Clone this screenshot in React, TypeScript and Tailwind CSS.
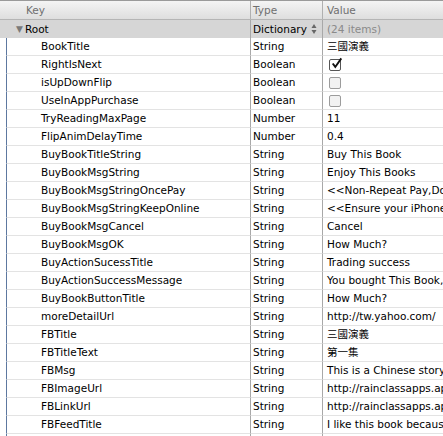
import React from "react";

type Row = {
  key: string;
  type: string;
  value?: string;
  check?: boolean;
};

const rows: Row[] = [
  { key: "BookTitle", type: "String", value: "三國演義" },
  { key: "RightIsNext", type: "Boolean", check: true },
  { key: "isUpDownFlip", type: "Boolean", check: false },
  { key: "UseInAppPurchase", type: "Boolean", check: false },
  { key: "TryReadingMaxPage", type: "Number", value: "11" },
  { key: "FlipAnimDelayTime", type: "Number", value: "0.4" },
  { key: "BuyBookTitleString", type: "String", value: "Buy This Book" },
  { key: "BuyBookMsgString", type: "String", value: "Enjoy This Books" },
  { key: "BuyBookMsgStringOncePay", type: "String", value: "<<Non-Repeat Pay,Download Forever>>" },
  { key: "BuyBookMsgStringKeepOnline", type: "String", value: "<<Ensure your iPhone is online>>" },
  { key: "BuyBookMsgCancel", type: "String", value: "Cancel" },
  { key: "BuyBookMsgOK", type: "String", value: "How Much?" },
  { key: "BuyActionSucessTitle", type: "String", value: "Trading success" },
  { key: "BuyActionSuccessMessage", type: "String", value: "You bought This Book, thanks" },
  { key: "BuyBookButtonTitle", type: "String", value: "How Much?" },
  { key: "moreDetailUrl", type: "String", value: "http://tw.yahoo.com/" },
  { key: "FBTitle", type: "String", value: "三國演義" },
  { key: "FBTitleText", type: "String", value: "第一集" },
  { key: "FBMsg", type: "String", value: "This is a Chinese story book" },
  { key: "FBImageUrl", type: "String", value: "http://rainclassapps.appspot.com/icon.png" },
  { key: "FBLinkUrl", type: "String", value: "http://rainclassapps.appspot.com/" },
  { key: "FBFeedTitle", type: "String", value: "I like this book because it is fun" },
  { key: "FBFeedCaption", type: "String", value: "Three Kingdoms" },
];

const Checkbox = ({ checked }: { checked: boolean }) => (
  <div
    className={`w-[12px] h-[12px] rounded-[2px] border ${
      checked ? "border-[#555] bg-white" : "border-[#9c9c9c] bg-[#f2f2f2]"
    } relative`}
  >
    {checked && (
      <svg viewBox="0 0 14 14" className="absolute -top-[3px] left-[1px] w-[12px] h-[13px]">
        <path d="M2 7 L5 11 L12 1" fill="none" stroke="#111" strokeWidth="2.2" />
      </svg>
    )}
  </div>
);

export default function App() {
  return (
    <div
      className="w-[443px] h-[436px] overflow-hidden bg-white text-[10.5px] text-black"
      style={{ fontFamily: '"DejaVu Sans", "Noto Sans CJK TC", sans-serif' }}
    >
      {/* Header */}
      <div className="grid grid-cols-[251px_72px_1fr] h-[20px] border-t border-[#9a9a9a] border-b border-b-[#b5b5b5] bg-gradient-to-b from-[#f4f4f4] to-[#dedede] text-[#6f6f6f]">
        <div className="border-r border-[#b0b0b0] pl-[26px] leading-[18px]">Key</div>
        <div className="border-r border-[#b0b0b0] pl-[2px] leading-[18px]">Type</div>
        <div className="pl-[4px] leading-[18px]">Value</div>
      </div>

      {/* Root */}
      <div className="grid grid-cols-[251px_72px_1fr] h-[18px] bg-[#d6d6d6] leading-[18px]">
        <div className="border-r border-[#a8a8a8] flex items-center pl-[16px]">
          <span className="text-[#7a7a7a] text-[9px] mr-[2px]">▼</span>
          <span>Root</span>
        </div>
        <div className="border-r border-[#a8a8a8] flex items-center justify-between pl-[2px] pr-[5px]">
          <span>Dictionary</span>
          <svg viewBox="0 0 6 12" className="w-[6px] h-[12px] shrink-0">
            <path d="M3 1 L5.5 5 L0.5 5 Z" fill="#666" />
            <path d="M3 11 L5.5 7 L0.5 7 Z" fill="#666" />
          </svg>
        </div>
        <div className="pl-[4px] text-[#8a8a8a]">(24 items)</div>
      </div>

      {/* Children */}
      {rows.map((r) => (
        <div key={r.key} className="grid grid-cols-[251px_72px_1fr] h-[18px] leading-[17px]">
          <div className="pl-[6px]">
            <div className="h-full border-l border-[#5d78a0] border-r border-r-[#a8a8a8] border-b border-b-[#e3e3e3] pl-[34px] whitespace-nowrap overflow-hidden">
              {r.key}
            </div>
          </div>
          <div className="border-r border-[#a8a8a8] border-b border-b-[#e3e3e3] pl-[2px]">{r.type}</div>
          <div className="border-b border-[#e3e3e3] pl-[4px] whitespace-nowrap overflow-hidden">
            {r.check === undefined ? (
              r.value
            ) : (
              <div className="h-full flex items-center pl-[2px]">
                <Checkbox checked={r.check} />
              </div>
            )}
          </div>
        </div>
      ))}
    </div>
  );
}
